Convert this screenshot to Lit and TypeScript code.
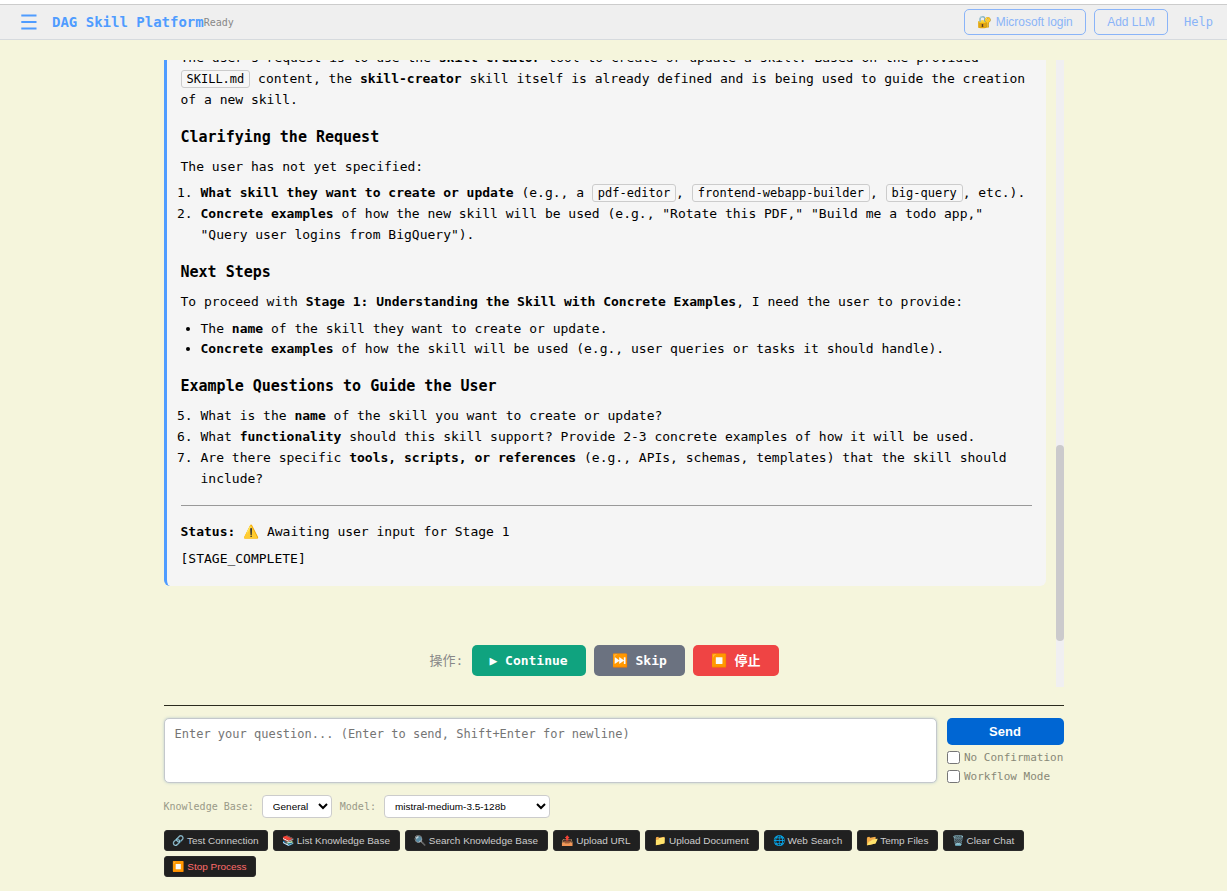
import { LitElement, html, css } from "lit";
import { customElement } from "lit/decorators.js";

const TOOLS: { icon: string; label: string; width: number; danger?: boolean }[] = [
  { icon: "🔗", label: "Test Connection", width: 104 },
  { icon: "📚", label: "List Knowledge Base", width: 127 },
  { icon: "🔍", label: "Search Knowledge Base", width: 143 },
  { icon: "📤", label: "Upload URL", width: 87 },
  { icon: "📁", label: "Upload Document", width: 114 },
  { icon: "🌐", label: "Web Search", width: 88 },
  { icon: "📂", label: "Temp Files", width: 81 },
  { icon: "🗑️", label: "Clear Chat", width: 81 },
  { icon: "⏹️", label: "Stop Process", width: 92, danger: true },
];

@customElement("app-header")
class AppHeader extends LitElement {
  static styles = css`
    :host {
      display: flex;
      align-items: center;
      box-sizing: border-box;
      height: 36px;
      padding: 0 14px 0 21px;
      border-top: 1px solid #ccc;
      border-bottom: 1px solid #d6dade;
      background: #efefef;
      font-family: "DejaVu Sans Mono", monospace;
    }
    .menu {
      width: 16px;
      height: 16px;
      margin-right: 15px;
      display: block;
    }
    .title {
      font-size: 14px;
      font-weight: bold;
      color: #4f9cff;
    }
    .status {
      font-size: 10px;
      color: #888;
      flex: 1;
    }
    .btn {
      box-sizing: border-box;
      height: 26px;
      border: 1px solid #8ab4f8;
      border-radius: 5px;
      background: transparent;
      color: #8ab4f8;
      font: 11.95px "Liberation Sans", Arial, sans-serif;
      padding: 0;
      margin-right: 8px;
      white-space: nowrap;
    }
    .login {
      width: 122px;
    }
    .llm {
      width: 74px;
      margin-right: 16px;
    }
    .help {
      font-size: 12px;
      color: #8ab4f8;
    }
  `;
  render() {
    return html`
      <svg class="menu" viewBox="0 0 16 16">
        <path d="M0.3 1.5h15.2M0.3 8h15.2M0.3 14.5h15.2" stroke="#4f9cff" stroke-width="1.8" />
      </svg>
      <span class="title">DAG Skill Platform</span>
      <span class="status">Ready</span>
      <button class="btn login">🔐 Microsoft login</button>
      <button class="btn llm">Add LLM</button>
      <span class="help">Help</span>
    `;
  }
}

@customElement("chat-log")
class ChatLog extends LitElement {
  static styles = css`
    :host {
      display: flex;
      height: 627px;
      overflow: hidden;
      font: 13px/20.8px "DejaVu Sans Mono", "Noto Sans CJK SC", monospace;
      color: #000;
    }
    .content {
      flex: 1;
      padding-right: 10px;
      min-width: 0;
    }
    .card {
      box-sizing: border-box;
      height: 546px;
      margin-top: -20px;
      padding: 8.05px 14px 0;
      border-left: 3px solid #4f9cff;
      border-radius: 6px;
      background: #f5f5f5;
    }
    p {
      margin: 0 0 6px;
    }
    h3 {
      font-size: 15px;
      line-height: 24px;
      margin: 14.25px 0 7.85px;
    }
    ol,
    ul {
      margin: 0;
      padding-left: 20px;
    }
    code {
      font: 12px "DejaVu Sans Mono", monospace;
      padding: 1px 5px;
      border: 1px solid #ccc;
      border-radius: 3px;
      background: #f7f7f7;
    }
    hr {
      border: 0;
      height: 1px;
      background: #999;
      margin: 15.6px 0 16px;
    }
    .actions {
      display: flex;
      justify-content: center;
      align-items: center;
      gap: 8px;
      margin-top: 59px;
    }
    .label {
      color: #888;
      margin: 1px 1px 0 0;
    }
    .btn {
      box-sizing: border-box;
      height: 31px;
      border: 0;
      border-radius: 5px;
      padding: 0 0 0 17.3px;
      text-align: left;
      color: #fff;
      font: bold 13px/15px "DejaVu Sans Mono", "Noto Sans CJK SC", monospace;
      white-space: nowrap;
    }
    .go {
      width: 114px;
      padding-left: 17px;
      background: #10a37f;
    }
    .skip {
      width: 91px;
      background: #6b7280;
    }
    .stop {
      width: 86px;
      background: #ef4444;
    }
    .track {
      width: 8px;
      background: #f0eff1;
    }
    .thumb {
      height: 196px;
      margin-top: 385px;
      border-radius: 4px;
      background: #cbcacc;
    }
  `;
  render() {
    return html`
      <div class="content">
        <div class="card">
          <p>
            The user's request is to use the <b>skill-creator</b> tool to create or update a skill. Based on the
            provided <code>SKILL.md</code> content, the <b>skill-creator</b> skill itself is already defined and is
            being used to guide the creation of a new skill.
          </p>
          <h3>Clarifying the Request</h3>
          <p>The user has not yet specified:</p>
          <ol>
            <li>
              <b>What skill they want to create or update</b> (e.g., a <code>pdf-editor</code>,
              <code>frontend-webapp-builder</code>, <code>big-query</code>, etc.).
            </li>
            <li>
              <b>Concrete examples</b> of how the new skill will be used (e.g., "Rotate this PDF," "Build me a todo
              app," "Query user logins from BigQuery").
            </li>
          </ol>
          <h3>Next Steps</h3>
          <p>
            To proceed with <b>Stage 1: Understanding the Skill with Concrete Examples</b>, I need the user to
            provide:
          </p>
          <ul>
            <li>The <b>name</b> of the skill they want to create or update.</li>
            <li><b>Concrete examples</b> of how the skill will be used (e.g., user queries or tasks it should handle).</li>
          </ul>
          <h3>Example Questions to Guide the User</h3>
          <ol start="5">
            <li>What is the <b>name</b> of the skill you want to create or update?</li>
            <li>
              What <b>functionality</b> should this skill support? Provide 2-3 concrete examples of how it will be
              used.
            </li>
            <li>
              Are there specific <b>tools, scripts, or references</b> (e.g., APIs, schemas, templates) that the skill
              should include?
            </li>
          </ol>
          <hr />
          <p><b>Status:</b> ⚠️ Awaiting user input for Stage 1</p>
          <p>[STAGE_COMPLETE]</p>
        </div>
        <div class="actions">
          <span class="label">操作:</span>
          <button class="btn go">▶ Continue</button>
          <button class="btn skip">⏭️ Skip</button>
          <button class="btn stop">⏹️ 停止</button>
        </div>
      </div>
      <div class="track"><div class="thumb"></div></div>
    `;
  }
}

@customElement("chat-composer")
class ChatComposer extends LitElement {
  static styles = css`
    :host {
      display: block;
      margin-top: 18px;
      padding-top: 12px;
      border-top: 1px solid #2b2b1e;
      font-family: "DejaVu Sans Mono", monospace;
    }
    .entry {
      display: flex;
      gap: 10px;
      height: 65px;
    }
    textarea {
      box-sizing: border-box;
      flex: 1;
      height: 65px;
      margin: 0;
      padding: 8px 10px;
      resize: none;
      border: 1px solid #c4c8cc;
      border-radius: 5px;
      background: #fff;
      box-shadow: 0 0 3px rgba(80, 130, 180, 0.35);
      font: 12px "DejaVu Sans Mono", monospace;
    }
    textarea::placeholder {
      color: #757575;
    }
    .side {
      width: 117px;
    }
    .send {
      width: 117px;
      height: 27px;
      border: 0;
      border-radius: 5px;
      padding: 0;
      background: #0066d3;
      color: #fff;
      font: bold 13px "Liberation Sans", Arial, sans-serif;
      display: block;
      margin-bottom: 6px;
    }
    .check {
      display: flex;
      align-items: center;
      gap: 4.5px;
      height: 13px;
      margin-bottom: 6px;
      font-size: 11px;
      color: #888877;
      white-space: nowrap;
    }
    .check input {
      margin: 0;
      width: 13px;
      height: 13px;
      flex: none;
    }
    .options {
      display: flex;
      align-items: center;
      margin-top: 12px;
      font-size: 10px;
      color: #999988;
    }
    select {
      box-sizing: border-box;
      height: 23px;
      border: 1px solid #ccc;
      border-radius: 4px;
      background: #fff;
      color: #000;
      padding: 0 0 0 6px;
      margin: 0 8px;
      font: 9.98px "Liberation Sans", Arial, sans-serif;
    }
    .kb {
      width: 70px;
    }
    .model {
      width: 166px;
    }
    .tools {
      display: flex;
      flex-wrap: wrap;
      gap: 5px;
      margin-top: 12px;
    }
    .tool {
      box-sizing: border-box;
      height: 21px;
      border: 1px solid #2a2a2a;
      border-radius: 3px;
      padding: 0;
      background: #202020;
      color: #ccc;
      font: 9.98px "Liberation Sans", Arial, sans-serif;
      white-space: nowrap;
    }
    .danger {
      color: #ff6b6b;
    }
  `;
  render() {
    return html`
      <div class="entry">
        <textarea placeholder="Enter your question... (Enter to send, Shift+Enter for newline)"></textarea>
        <div class="side">
          <button class="send">Send</button>
          <label class="check"><input type="checkbox" />No Confirmation</label>
          <label class="check"><input type="checkbox" />Workflow Mode</label>
        </div>
      </div>
      <div class="options">
        <span>Knowledge Base:</span>
        <select class="kb"><option>General</option></select>
        <span>Model:</span>
        <select class="model"><option>mistral-medium-3.5-128b</option></select>
      </div>
      <div class="tools">
        ${TOOLS.map(
          (t) => html`<button class="tool ${t.danger ? "danger" : ""}" style="width:${t.width}px">${t.icon} ${t.label}</button>`
        )}
      </div>
    `;
  }
}

@customElement("app-root")
class AppRoot extends LitElement {
  static styles = css`
    :host {
      display: block;
      box-sizing: border-box;
      height: 891px;
      padding-top: 4px;
      overflow: hidden;
      background: linear-gradient(#fff 4px, #f5f5dc 4px);
    }
    .main {
      width: 900px;
      margin: 20px auto 0;
    }
  `;
  render() {
    return html`
      <app-header></app-header>
      <div class="main">
        <chat-log></chat-log>
        <chat-composer></chat-composer>
      </div>
    `;
  }
}
